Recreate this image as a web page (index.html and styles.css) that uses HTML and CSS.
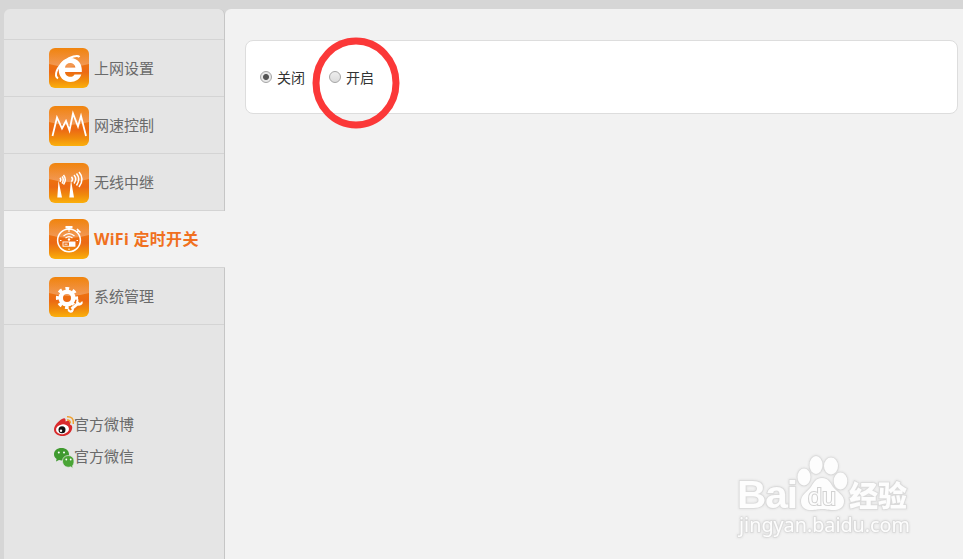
FILE: index.html
```
<!DOCTYPE html>
<html lang="zh-CN">
<head>
    <meta charset="UTF-8">
    <meta name="viewport" content="width=device-width, initial-scale=1.0">
    <title>WiFi 定时开关</title>
    <link rel="stylesheet" href="styles.css">
</head>
<body>
    <!-- shared icon background -->
    <svg class="defs" width="0" height="0">
        <defs>
            <linearGradient id="orange" x1="0" y1="0" x2="0" y2="1">
                <stop offset="0" stop-color="#f08208"/>
                <stop offset="0.6" stop-color="#ec6a14"/>
                <stop offset="0.8" stop-color="#f08a0c"/>
                <stop offset="1" stop-color="#fbb00c"/>
            </linearGradient>
            <linearGradient id="gloss" x1="0" y1="0" x2="0" y2="1">
                <stop offset="0" stop-color="#fff" stop-opacity="0.02"/>
                <stop offset="1" stop-color="#fff" stop-opacity="0.3"/>
            </linearGradient>
            <g id="tile">
                <rect width="40" height="40" rx="6" fill="url(#orange)"/>
                <path d="M0 6a6 6 0 0 1 6-6h28a6 6 0 0 1 6 6v10Q20 22 0 16z" fill="url(#gloss)"/>
            </g>
        </defs>
    </svg>

    <div class="page">
        <div class="sidebar">
            <ul class="menu">
                <li>
                    <svg class="menu-icon" viewBox="0 0 40 40">
                        <use href="#tile"/>
                        <path d="M16 24h16.800c.7-7.500-3.500-14-11.300-14-6.700 0-11.800 5.200-11.800 12 0 7 5 12 11.800 12 5 0 9.300-2.800 10.800-7.500h-6.800c-.8 1.600-2.200 2.300-4 2.300-3 0-5.300-1.800-5.500-4.800zm0-4.500c.4-2.800 2.500-4.500 5.200-4.500s4.900 1.700 5.200 4.500z" fill="#fff" fill-rule="evenodd"/>
                        <path d="M9 30.500c-4.500-3-1-11.500 6.500-17.300 6-4.500 13-6.500 15-4.200" fill="none" stroke="#fff" stroke-width="2"/>
                    </svg>
                    <span>上网设置</span>
                </li>
                <li>
                    <svg class="menu-icon" viewBox="0 0 40 40">
                        <use href="#tile"/>
                        <path d="M3.500 30L8 11.500l5 11 4-7.500 3.500 9.500L24 7.500l5 13L32 10l5 20" fill="none" stroke="#fff" stroke-width="1.800"/>
                    </svg>
                    <span>网速控制</span>
                </li>
                <li>
                    <svg class="menu-icon" viewBox="0 0 40 40">
                        <use href="#tile"/>
                        <path d="M9.500 17.500l3.500 17H8.300zM22 17l3 17.500h-4.700z" fill="#fff"/>
                        <g fill="none" stroke="#fff" stroke-width="1.500">
                            <path d="M11 14.800q1.500 1.800 0 4M13 13.500q2.500 3 0 7M14.500 12q3.500 4.500 0 9.500"/>
                            <path d="M22.500 13.800q2 2.300 0 5M25 12q3.500 4 0 8.500M27.500 10.500q4.500 5.500 0 12M30 9q6 7 0 15"/>
                        </g>
                    </svg>
                    <span>无线中继</span>
                </li>
                <li class="active">
                    <svg class="menu-icon" viewBox="0 0 40 40">
                        <use href="#tile"/>
                        <circle cx="20" cy="21.300" r="11.400" fill="none" stroke="#fff" stroke-width="1.500"/>
                        <path d="M16.500 7h7v2.500h-2l-.5 2h-2l-.5-2h-2z" fill="#fff"/>
                        <path d="M27.500 13.500l2-2M28 10l3.500 3.500" stroke="#fff" stroke-width="1.600"/>
                        <path d="M14.500 17q5.500-4.800 11 0M16.500 19q3.500-2.800 7 0" fill="none" stroke="#fff" stroke-width="1.300"/>
                        <circle cx="20" cy="20.500" r="1.200" fill="#fff"/>
                        <rect x="14" y="23" width="12" height="4.200" fill="none" stroke="#fff" stroke-width="0.900"/>
                        <path d="M20 23h6v4.200h-6zM19.500 12v1h1v-1zM19.500 29.500V31h1v-1.500zM11 21h1.500v1H11zM27.500 21H29v1h-1.500z" fill="#fff"/>
                        <path d="M15.500 25.200h3" stroke="#fff" stroke-width="0.900"/>
                    </svg>
                    <span>WiFi 定时开关</span>
                </li>
                <li>
                    <svg class="menu-icon" viewBox="0 0 40 40">
                        <use href="#tile"/>
                        <circle cx="18" cy="21" r="6.300" fill="none" stroke="#fff" stroke-width="4.600"/>
                        <circle cx="18" cy="21" r="9.300" fill="none" stroke="#fff" stroke-width="3.600" stroke-dasharray="3.652" stroke-dashoffset="1.826"/>
                        <path d="M21 34l11.500-9" stroke="#ee7a12" stroke-width="5.500"/>
                        <path d="M22.500 31.800l7-5.600" stroke="#fff" stroke-width="3"/>
                        <path d="M33.300 24a3.200 3.200 0 1 1-3.800-1.700l-.2 2.500 1.700 1.100zM19 31.600a3 3 0 1 0 3.600-1.800l.6 2.300-1.500 1.300z" fill="#fff"/>
                    </svg>
                    <span>系统管理</span>
                </li>
            </ul>
            <div class="social">
                <div class="social-link">
                    <svg width="20" height="22" viewBox="0 0 20 22">
                        <path d="M8 4c3-2 4 0 3.500 2.500C15 5 17 6 16 9.500c3 1 2.500 4 1.500 6C15.500 19.500 12 21 8.500 21 4 21 0 18.500 0 14.500 0 10.500 4.500 6 8 4z" fill="#d92a2c"/>
                        <ellipse cx="8.500" cy="14.300" rx="6.500" ry="4.900" fill="#fff" transform="rotate(-8 8.500 14.300)"/>
                        <circle cx="8" cy="14.800" r="3.500" fill="#111"/>
                        <circle cx="7" cy="15.700" r="1.200" fill="#fff"/>
                        <path d="M13 1.700q7-.5 6.300 7.300M13 5q3.500-.3 3.400 3.300" fill="none" stroke="#f0a030" stroke-width="1.500"/>
                    </svg>
                    <span>官方微博</span>
                </div>
                <div class="social-link">
                    <svg width="20" height="22" viewBox="0 0 20 22">
                        <path d="M7.500 1C3 1 0 3.700 0 7.200c0 2 1 3.600 2.600 4.700L2 14.500l3-1.400q2.500.6 5 0c4-.8 5-3.500 5-5.900C15 3.700 12 1 7.500 1z" fill="#3f9a2f"/>
                        <path d="M14.300 8.500c-3.600 0-5.800 2.400-5.800 5.500s2.200 6.200 5.800 6.200q1.300 0 2.300-.4l2.500 1.400-.6-2.400c1-1 1.500-2.500 1.500-4.800 0-3.100-2.200-5.500-5.700-5.500z" fill="#4aa536" stroke="#e5e5e5" stroke-width="0.700"/>
                        <g fill="#fff">
                            <circle cx="4.800" cy="5.500" r="1"/>
                            <circle cx="10" cy="5.500" r="1"/>
                            <circle cx="12.300" cy="12.500" r="0.900"/>
                            <circle cx="16.700" cy="12.500" r="0.900"/>
                        </g>
                    </svg>
                    <span>官方微信</span>
                </div>
            </div>
        </div>

        <div class="content">
            <form class="panel">
                <label><input type="radio" name="timer" value="off" checked><span>关闭</span></label>
                <label><input type="radio" name="timer" value="on"><span>开启</span></label>
            </form>
        </div>
    </div>

    <svg class="mark" width="88" height="92" viewBox="0 0 88 92">
        <ellipse cx="44" cy="46" rx="40" ry="42" fill="none" stroke="#fb3838" stroke-width="7"/>
    </svg>

    <svg class="watermark" width="190" height="90" viewBox="0 0 190 90">
        <g class="watermark-shape">
            <text class="wm-logo" x="7" y="58" textLength="60" lengthAdjust="spacingAndGlyphs">Bai</text>
            <ellipse cx="74" cy="27" rx="6.500" ry="8.500"/>
            <ellipse cx="86" cy="15" rx="6.500" ry="9"/>
            <ellipse cx="101" cy="16" rx="7" ry="8.500"/>
            <ellipse cx="110.500" cy="31" rx="6.800" ry="8.500"/>
            <path d="M92 28c6 0 8 4 11 9 4 5 11 8 11 14 0 6-4 9-11 9-5 0-7-1-11-1s-6 1-11 1c-6 0-10-3-10-9s6-9 10-14c3-5 5-9 11-9z"/>
            <text class="wm-du" x="78" y="55" textLength="28" lengthAdjust="spacingAndGlyphs">du</text>
            <text class="wm-cn" x="119" y="57">经验</text>
            <text class="wm-url" x="9" y="82" textLength="171" lengthAdjust="spacingAndGlyphs">jingyan.baidu.com</text>
        </g>
    </svg>
</body>
</html>
```
FILE: styles.css
```
body {
    font-family: "Noto Sans", "Noto Sans CJK SC", sans-serif;
    background-color: #d6d6d6;
    margin: 0;
    height: 100vh;
    overflow: hidden;
}
.defs {
    display: block;
}
.page {
    display: flex;
    box-sizing: border-box;
    height: 100vh;
    padding: 9px 0 0 4px;
}
.sidebar {
    width: 221px;
    box-sizing: border-box;
    flex-shrink: 0;
    background-color: #e5e5e5;
    border-right: 1px solid #c6c6c6;
    border-radius: 6px 6px 0 0;
}
.menu {
    list-style: none;
    margin: 30px 0 0;
    padding: 0;
    border-top: 1px solid #d4d4d4;
}
.menu li {
    display: flex;
    align-items: center;
    gap: 5px;
    box-sizing: border-box;
    height: 57px;
    padding: 1px 0 0 45px;
    border-bottom: 1px solid #d4d4d4;
    color: #6a6a6a;
    font-size: 15px;
    white-space: nowrap;
}
.menu li:first-child {
    padding-top: 0;
}
.menu li.active {
    padding-top: 0;
    margin-right: -1px;
    background-color: #f2f2f2;
    color: #f07020;
    font-size: 16px;
    font-weight: bold;
    letter-spacing: 0.300px;
}
.menu li span {
    padding-bottom: 2px;
}
.menu-icon {
    width: 40px;
    height: 40px;
}
.social {
    display: flex;
    flex-direction: column;
    gap: 10px;
    margin-top: 90px;
    padding-left: 50px;
}
.social-link {
    display: flex;
    align-items: center;
    height: 22px;
    color: #6a6a6a;
    font-size: 15px;
}
.social-link span {
    padding-bottom: 5px;
}
.content {
    flex: 1;
    padding: 31px 5px 0 20px;
    background-color: #f2f2f2;
    border-top-left-radius: 6px;
}
.panel {
    display: flex;
    align-items: center;
    gap: 24px;
    box-sizing: border-box;
    height: 74px;
    padding: 0 14px;
    background-color: #fff;
    border: 1px solid #ddd;
    border-radius: 8px;
}
.panel label {
    display: flex;
    align-items: center;
    gap: 5px;
    color: #333;
    font-size: 14px;
}
.panel input {
    appearance: none;
    width: 12px;
    height: 12px;
    margin: 0;
    border: 1px solid #a5a5a5;
    border-radius: 50%;
    background: linear-gradient(#eee, #dcdcdc);
}
.panel input:checked {
    background: radial-gradient(circle, #555 0 2.500px, #e8e8e8 3.500px);
}
.mark {
    position: absolute;
    left: 312px;
    top: 37px;
}
.watermark {
    position: absolute;
    left: 730px;
    top: 450px;
}
.watermark-shape {
    fill: #fdfdfd;
    stroke: #dadada;
    stroke-width: 1.500px;
    paint-order: stroke;
    filter: drop-shadow(0 0 1px #d6d6d6);
}
.wm-logo {
    font: bold 38px "Liberation Sans", sans-serif;
    letter-spacing: -1px;
}
.wm-du {
    font: 24px "Liberation Sans", sans-serif;
    stroke: #d2d2d2;
    stroke-width: 2px;
}
.wm-cn {
    font: 900 29px "Noto Sans CJK SC", sans-serif;
}
.wm-url {
    font: 19px "Noto Sans", sans-serif;
}
```
